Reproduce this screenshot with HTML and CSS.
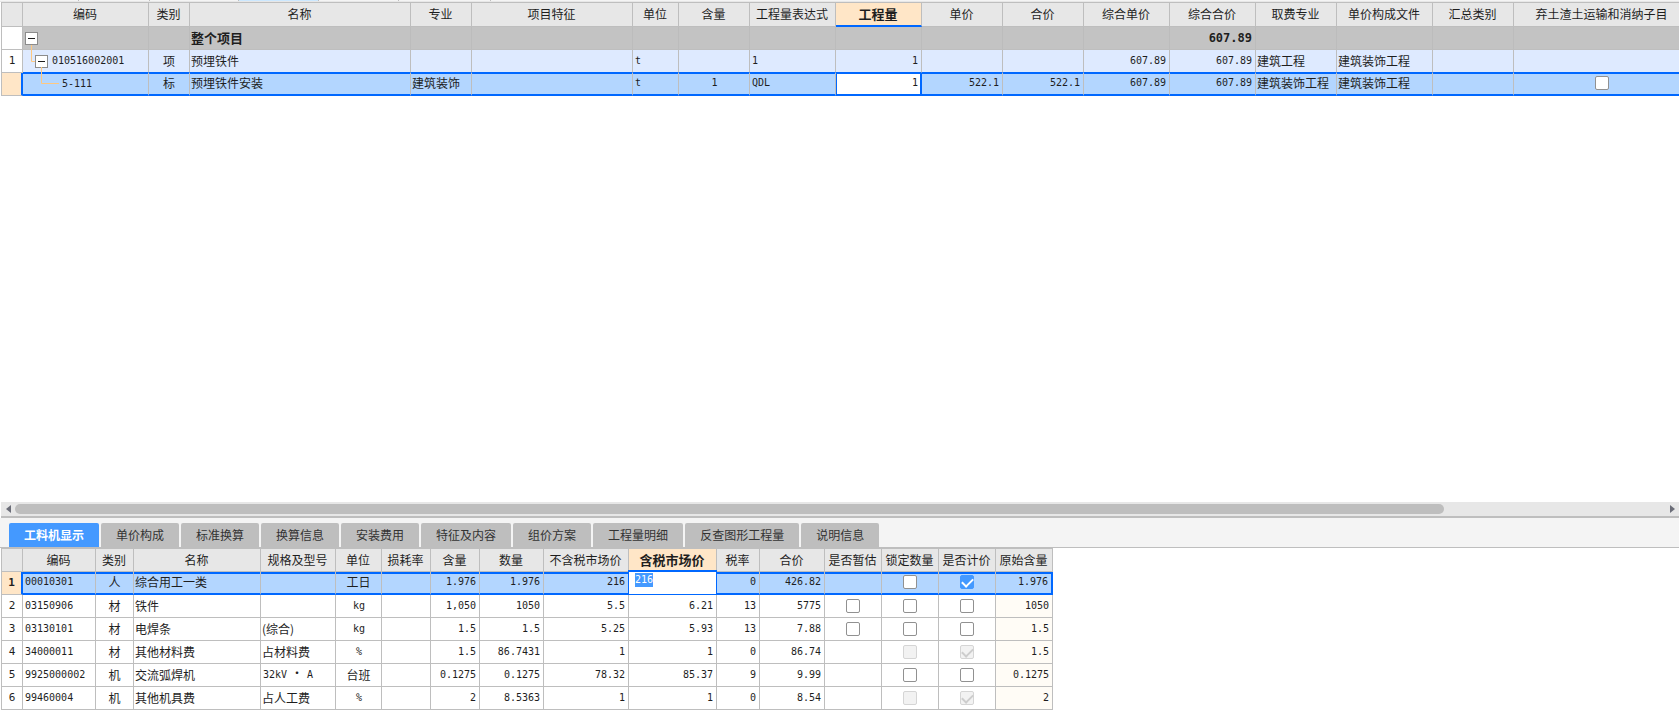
FILE: index.html
```
<!DOCTYPE html>
<html lang="zh-CN">
<head>
<meta charset="utf-8">
<title>工程量清单</title>
<link rel="stylesheet" href="styles.css">
</head>
<body>
<div class="app">
  <div class="top-strip"><i class="s79"></i><i class="s71"></i><i class="s89"></i><i class="s80 on"></i><i class="s80"></i><i class="s92"></i></div>
  <main class="bill">
    <table class="grid bill-grid">
      <colgroup><col class="c21"><col class="c126"><col class="c41"><col class="c221"><col class="c61"><col class="c161"><col class="c46"><col class="c71"><col class="c86"><col class="c86"><col class="c81"><col class="c81"><col class="c86"><col class="c86"><col class="c81"><col class="c96"><col class="c81"><col class="c177"></colgroup>
      <thead><tr><th></th><th>编码</th><th>类别</th><th>名称</th><th>专业</th><th>项目特征</th><th>单位</th><th>含量</th><th>工程量表达式</th><th class="current">工程量</th><th>单价</th><th>合价</th><th>综合单价</th><th>综合合价</th><th>取费专业</th><th>单价构成文件</th><th>汇总类别</th><th>弃土渣土运输和消纳子目</th></tr></thead>
      <tbody>
        <tr class="total"><td class="idx"></td><td class="tree"><div class="node"><button class="toggle" aria-label="折叠整个项目"></button></div></td><td></td><td class="strong">整个项目</td><td></td><td></td><td></td><td></td><td></td><td></td><td></td><td></td><td></td><td class="num strong">607.89</td><td></td><td></td><td></td><td></td></tr>
        <tr class="item"><td class="idx">1</td><td class="tree"><div class="node child"><svg class="branch" width="4" height="17" viewBox="0 0 4 17"><path d="M.5 0V16.500H4" /></svg><button class="toggle" aria-label="折叠 010516002001"></button><span class="code">010516002001</span></div></td><td class="mid">项</td><td>预埋铁件</td><td></td><td></td><td class="code">t</td><td></td><td class="code">1</td><td class="num">1</td><td></td><td></td><td class="num">607.89</td><td class="num">607.89</td><td>建筑工程</td><td>建筑装饰工程</td><td></td><td></td></tr>
        <tr class="selected"><td class="idx"></td><td class="tree"><div class="node leaf"><svg class="branch" width="18" height="17" viewBox="0 0 18 17"><path d="M.5 0V16.500H18" /></svg><span class="code">5-111</span></div></td><td class="mid">标</td><td>预埋铁件安装</td><td>建筑装饰</td><td></td><td class="code">t</td><td class="code mid">1</td><td class="code">QDL</td><td class="num focus">1</td><td class="num">522.1</td><td class="num">522.1</td><td class="num">607.89</td><td class="num">607.89</td><td>建筑装饰工程</td><td>建筑装饰工程</td><td></td><td class="mid"><input type="checkbox" aria-label="弃土渣土运输和消纳子目"></td></tr>
      </tbody>
    </table>
  </main>
  <div class="scrollbar">
    <button class="arrow" aria-label="向左滚动"><svg width="5" height="8" viewBox="0 0 5 8"><path d="M5 0V8L0 4Z"/></svg></button>
    <div class="track"><div class="thumb"></div></div>
    <button class="arrow" aria-label="向右滚动"><svg width="5" height="8" viewBox="0 0 5 8"><path d="M0 0V8L5 4Z"/></svg></button>
  </div>
  <nav class="tabs"><button class="tab active">工料机显示</button><button class="tab">单价构成</button><button class="tab">标准换算</button><button class="tab">换算信息</button><button class="tab">安装费用</button><button class="tab">特征及内容</button><button class="tab">组价方案</button><button class="tab">工程量明细</button><button class="tab">反查图形工程量</button><button class="tab">说明信息</button></nav>
  <section class="detail">
    <table class="grid detail-grid">
      <colgroup><col class="c21"><col class="c73"><col class="c38"><col class="c127"><col class="c75"><col class="c46"><col class="c49"><col class="c49"><col class="c64"><col class="c85"><col class="c88"><col class="c43"><col class="c65"><col class="c57"><col class="c57"><col class="c57"><col class="c57"></colgroup>
      <thead><tr><th></th><th>编码</th><th>类别</th><th>名称</th><th>规格及型号</th><th>单位</th><th>损耗率</th><th>含量</th><th>数量</th><th>不含税市场价</th><th class="current">含税市场价</th><th>税率</th><th>合价</th><th>是否暂估</th><th>锁定数量</th><th>是否计价</th><th>原始含量</th></tr></thead>
      <tbody>
        <tr class="selected"><td class="idx strong">1</td><td class="code">00010301</td><td class="mid">人</td><td>综合用工一类</td><td></td><td class="mid">工日</td><td></td><td class="num">1.976</td><td class="num">1.976</td><td class="num">216</td><td class="editing"><div class="editor" role="textbox" contenteditable="true" aria-label="含税市场价"><span class="picked">216</span></div></td><td class="num">0</td><td class="num">426.82</td><td></td><td class="mid"><input type="checkbox" aria-label="锁定数量"></td><td class="mid"><input type="checkbox" checked aria-label="是否计价"></td><td class="num">1.976</td></tr>
        <tr><td class="idx">2</td><td class="code">03150906</td><td class="mid">材</td><td>铁件</td><td></td><td class="code mid">kg</td><td></td><td class="num">1,050</td><td class="num">1050</td><td class="num">5.5</td><td class="num">6.21</td><td class="num">13</td><td class="num">5775</td><td class="mid"><input type="checkbox" aria-label="是否暂估"></td><td class="mid"><input type="checkbox" aria-label="锁定数量"></td><td class="mid"><input type="checkbox" aria-label="是否计价"></td><td class="num origin">1050</td></tr>
        <tr><td class="idx">3</td><td class="code">03130101</td><td class="mid">材</td><td>电焊条</td><td>(综合)</td><td class="code mid">kg</td><td></td><td class="num">1.5</td><td class="num">1.5</td><td class="num">5.25</td><td class="num">5.93</td><td class="num">13</td><td class="num">7.88</td><td class="mid"><input type="checkbox" aria-label="是否暂估"></td><td class="mid"><input type="checkbox" aria-label="锁定数量"></td><td class="mid"><input type="checkbox" aria-label="是否计价"></td><td class="num origin">1.5</td></tr>
        <tr><td class="idx">4</td><td class="code">34000011</td><td class="mid">材</td><td>其他材料费</td><td>占材料费</td><td class="code mid">%</td><td></td><td class="num">1.5</td><td class="num">86.7431</td><td class="num">1</td><td class="num">1</td><td class="num">0</td><td class="num">86.74</td><td></td><td class="mid"><input type="checkbox" disabled aria-label="锁定数量"></td><td class="mid"><input type="checkbox" checked disabled aria-label="是否计价"></td><td class="num origin">1.5</td></tr>
        <tr><td class="idx">5</td><td class="code">9925000002</td><td class="mid">机</td><td>交流弧焊机</td><td class="code">32kV<span class="dot">·</span>A</td><td class="mid">台班</td><td></td><td class="num">0.1275</td><td class="num">0.1275</td><td class="num">78.32</td><td class="num">85.37</td><td class="num">9</td><td class="num">9.99</td><td></td><td class="mid"><input type="checkbox" aria-label="锁定数量"></td><td class="mid"><input type="checkbox" aria-label="是否计价"></td><td class="num origin">0.1275</td></tr>
        <tr><td class="idx">6</td><td class="code">99460004</td><td class="mid">机</td><td>其他机具费</td><td>占人工费</td><td class="code mid">%</td><td></td><td class="num">2</td><td class="num">8.5363</td><td class="num">1</td><td class="num">1</td><td class="num">0</td><td class="num">8.54</td><td></td><td class="mid"><input type="checkbox" disabled aria-label="锁定数量"></td><td class="mid"><input type="checkbox" checked disabled aria-label="是否计价"></td><td class="num origin">2</td></tr>
      </tbody>
    </table>
  </section>
</div>
</body>
</html>
```
FILE: styles.css
```
* { box-sizing: border-box; }
:root { --line: #bebebe; --blue: #0068ff; --accent: #4499ff; --head: #e7e7e7; --cream: #ffe6c7; }
body { margin: 0; background: #fff; color: #1e1e1e; font: 12px/16px "Noto Sans CJK SC", sans-serif; }
button { border: 0; padding: 0; font: inherit; color: inherit; }
.app { display: flex; flex-direction: column; min-height: 100vh; overflow: hidden; }

.top-strip { display: flex; height: 2px; background: #f4f4f4; border-bottom: 1px solid #e7e7e7; }
.top-strip i { border-right: 1px solid var(--line); }
.s71 { width: 71px; } .s79 { width: 79px; } .s80 { width: 80px; } .s89 { width: 89px; } .s92 { width: 92px; }
.top-strip .on { background: #cce8ff; }

.bill { flex: 1; overflow: hidden; margin-left: 1px; }
.grid { table-layout: fixed; border-collapse: separate; border-spacing: 0; border-top: 1px solid var(--line); border-left: 1px solid var(--line); }
.bill-grid { width: 1690px; }
.detail-grid { width: 1052px; }
.c21 { width: 21px; } .c38 { width: 38px; } .c41 { width: 41px; } .c43 { width: 43px; } .c46 { width: 46px; }
.c49 { width: 49px; } .c57 { width: 57px; } .c61 { width: 61px; } .c64 { width: 64px; } .c65 { width: 65px; }
.c71 { width: 71px; } .c73 { width: 73px; } .c75 { width: 75px; } .c81 { width: 81px; } .c85 { width: 85px; }
.c86 { width: 86px; } .c88 { width: 88px; } .c96 { width: 96px; } .c126 { width: 126px; } .c127 { width: 127px; }
.c161 { width: 161px; } .c177 { width: 177px; } .c221 { width: 221px; }

.grid th, .grid td { height: 23px; padding: 0 3px 1px 1px; border-right: 1px solid var(--line); border-bottom: 1px solid var(--line); white-space: nowrap; vertical-align: middle; text-align: left; }
.grid th { padding: 0 1px 1px 0; background: var(--head); font-weight: 400; text-align: center; }
.bill-grid th { height: 24px; }
.grid th.current { background: var(--cream); font-weight: 700; font-size: 13px; }
.bill-grid th.current { border-bottom: 2px solid var(--blue); }
.grid td.mid { padding: 0 1px 1px; text-align: center; }
.grid td.idx { padding: 0; text-align: center; background: #fff; font: 11px/16px "DejaVu Sans Mono", monospace; }
.grid .code, .grid .num { font-family: "DejaVu Sans Mono", "Noto Sans CJK SC", monospace; font-size: 10px; }
.grid td.code { padding-left: 2px; }
.grid td.num { text-align: right; }
.grid td.strong { font-weight: 700; }
.total td { background: #c3c3c3; border-right-color: #bcbcbc; }
.grid .total .strong { font-size: 13px; }
.grid .total .num { font-size: 12px; }
.item td { background: #deeaff; }
.origin { background: #fffcf6; }
.selected td { background: #b3d6ff; border-bottom: 2px solid var(--blue); box-shadow: inset 0 2px var(--blue); }
.bill-grid .selected td { box-shadow: inset 0 1px var(--blue); }
.item td:not(.idx) { border-bottom-color: var(--blue); }
.grid .selected td.idx { background: var(--cream); border-right: 2px solid var(--blue); border-bottom: 1px solid var(--line); box-shadow: none; }
.detail-grid .selected td:last-child { border-right: 2px solid var(--blue); }
.bill-grid .selected td.focus { background: #fff; box-shadow: inset 1px 1px var(--blue), inset -1px 0 var(--blue); border-right-color: var(--blue); }
.dot { font-family: "Noto Sans CJK SC", sans-serif; font-size: 12px; padding: 0 4px; line-height: 12px; }

.selected td.editing { position: relative; padding: 0; }
.editor { position: absolute; inset: -2px -1px -2px -1px; padding: 1px 6px; background: #fff; border: 1px solid var(--blue); border-top-width: 2px; font: 10px/14px "DejaVu Sans Mono", monospace; }
.picked { display: inline-block; background: var(--accent); color: #fff; }

.grid td.tree { padding: 0; }
.node { display: flex; align-items: center; height: 21px; position: relative; padding-left: 2px; }
.child { padding-left: 12px; gap: 4px; }
.leaf { padding-left: 39px; }
.toggle { width: 13px; height: 13px; background: linear-gradient(#1e1e1e, #1e1e1e) center / 7px 1px no-repeat #fff; border: 1px solid #8c8c8c; }
.branch { position: absolute; left: 8px; top: -6px; fill: none; stroke: #ffc880; }
.leaf .branch { left: 18px; }

input[type=checkbox] { appearance: none; display: block; width: 14px; height: 14px; margin: 0 auto; border: 1px solid #919191; border-radius: 2px; background: #fff; }
input[type=checkbox]:checked { border-color: var(--accent); background: var(--accent); }
input[type=checkbox]:disabled { border-color: #d5d5d5; background: #f2f2f2; }
input[type=checkbox]:checked::before { content: ""; display: block; width: 9px; height: 5px; margin: 2px auto 0; border: solid #fff; border-width: 0 0 2px 2px; transform: rotate(-45deg); }
input[type=checkbox]:disabled:checked::before { border-color: #cdcdcd; }

.scrollbar { display: flex; align-items: center; height: 16px; margin-left: 1px; background: #e7e7e7; border-bottom: 2px solid var(--line); }
.arrow { display: flex; width: 14px; padding-left: 5px; background: none; }
.arrow path { fill: #6b6d78; }
.track { flex: 1; }
.thumb { width: 86.6%; height: 10px; border-radius: 5px; background: var(--line); }

.tabs { display: flex; align-items: flex-end; gap: 2px; height: 30px; padding-left: 9px; background: #f4f4f4; border-bottom: 1px solid var(--line); }
.tab { height: 24px; padding: 0 15px; background: var(--line); border-radius: 2px 2px 0 0; color: #333; }
.tab.active { background: var(--accent); color: #fff; font-weight: 700; }
.detail { height: 173px; margin-left: 1px; }
```
